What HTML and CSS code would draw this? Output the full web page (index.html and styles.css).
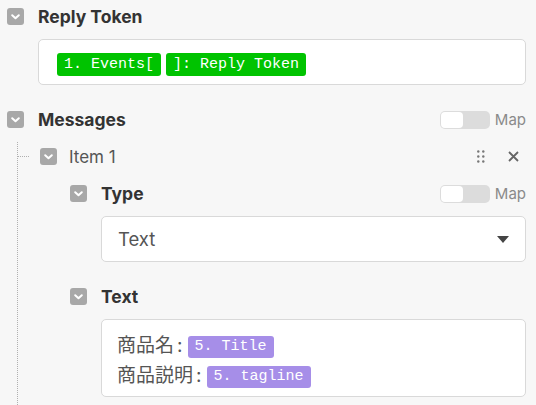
FILE: index.html
```html
<!DOCTYPE html>
<html>
<head>
  <meta charset="utf-8">
  <link rel="stylesheet" href="styles.css">
</head>
<body>
<div class="form">

  <section class="field">
    <div class="field-head">
      <span class="chk"><svg viewBox="0 0 17 17"><path d="M5.2 7.2 L8.5 10.3 L11.8 7.2"/></svg></span>
      <span class="label">Reply Token</span>
    </div>
    <div class="field-body">
      <div class="box tokens">
        <span class="pill green">1. Events[</span><span class="pill green">]: Reply Token</span>
      </div>
    </div>
  </section>

  <section class="field messages">
    <div class="field-head">
      <span class="chk"><svg viewBox="0 0 17 17"><path d="M5.2 7.2 L8.5 10.3 L11.8 7.2"/></svg></span>
      <span class="label">Messages</span>
      <div class="map-toggle"><span class="switch"><span class="knob"></span></span><span class="map-label">Map</span></div>
    </div>

    <div class="list">
      <div class="item">
        <div class="item-head">
          <span class="branch"></span>
          <span class="chk"><svg viewBox="0 0 17 17"><path d="M5.2 7.2 L8.5 10.3 L11.8 7.2"/></svg></span>
          <span class="item-label">Item 1</span>
          <span class="drag">
            <svg viewBox="0 0 8 13"><circle cx="1.3" cy="1.5" r="1.2"/><circle cx="6.3" cy="1.5" r="1.2"/><circle cx="1.3" cy="6.5" r="1.2"/><circle cx="6.3" cy="6.5" r="1.2"/><circle cx="1.3" cy="11.5" r="1.2"/><circle cx="6.3" cy="11.5" r="1.2"/></svg>
          </span>
          <span class="remove"><svg viewBox="0 0 11 11"><path d="M1 1 L10 10 M10 1 L1 10"/></svg></span>
        </div>

        <div class="item-body">
          <section class="field">
            <div class="field-head">
              <span class="chk"><svg viewBox="0 0 17 17"><path d="M5.2 7.2 L8.5 10.3 L11.8 7.2"/></svg></span>
              <span class="label">Type</span>
              <div class="map-toggle"><span class="switch"><span class="knob"></span></span><span class="map-label">Map</span></div>
            </div>
            <div class="field-body">
              <div class="box select">
                <span class="select-value">Text</span>
                <span class="caret"></span>
              </div>
            </div>
          </section>

          <section class="field text-field">
            <div class="field-head">
              <span class="chk"><svg viewBox="0 0 17 17"><path d="M5.2 7.2 L8.5 10.3 L11.8 7.2"/></svg></span>
              <span class="label">Text</span>
            </div>
            <div class="field-body">
              <div class="box textarea">
                <div class="line">商品名<span class="colon">:</span><span class="pill purple">5. Title</span></div>
                <div class="line">商品説明<span class="colon">:</span><span class="pill purple">5. tagline</span></div>
              </div>
            </div>
          </section>
        </div>
      </div>
    </div>
  </section>

</div>
</body>
</html>
```

FILE: styles.css
```css
html, body {
  margin: 0;
  padding: 0;
  height: 100%;
}
body {
  background-color: #f7f7f7;
  font-family: Inter, "Noto Sans CJK JP", sans-serif;
  color: #333;
  overflow: hidden;
}

.form {
  display: flex;
  flex-direction: column;
  height: 100vh;
  box-sizing: border-box;
  padding: 8px 10px 0 7px;
}

.field-head {
  display: flex;
  align-items: center;
  height: 17px;
}

.chk {
  flex: none;
  width: 17px;
  height: 17px;
  border-radius: 3px;
  background-color: #a8a8a8;
}
.chk svg {
  display: block;
  width: 17px;
  height: 17px;
  fill: none;
  stroke: #fff;
  stroke-width: 2;
  stroke-linecap: round;
  stroke-linejoin: round;
}

.label {
  margin-left: 14px;
  font-size: 17.5px;
  font-weight: 700;
  color: #333;
}

.field-body {
  margin-top: 14px;
  padding-left: 31px;
}

.box {
  background-color: #fff;
  border: 1px solid #d9d9d9;
  border-radius: 5px;
}

.tokens {
  display: flex;
  gap: 5px;
  padding: 13px 18px 8px;
}

.pill {
  display: inline-block;
  height: 23px;
  line-height: 23px;
  padding: 0 7px;
  border-radius: 3px;
  font-family: "Liberation Mono", monospace;
  font-size: 15px;
  color: #fff;
  white-space: pre;
}
.green {
  background-color: #00c300;
}
.purple {
  background-color: #a68ee8;
  margin-left: 5px;
  vertical-align: middle;
  height: 22px;
  line-height: 22px;
}

.messages {
  flex: 1;
  display: flex;
  flex-direction: column;
  margin-top: 26px;
}

.map-toggle {
  margin-left: auto;
  display: flex;
  align-items: center;
}
.switch {
  width: 50px;
  height: 18px;
  border-radius: 5px;
  background-color: #dcdcdc;
  padding: 1px;
  box-sizing: border-box;
}
.knob {
  display: block;
  width: 22px;
  height: 16px;
  border-radius: 4px;
  background-color: #fff;
}
.map-label {
  margin-left: 5px;
  font-size: 15px;
  color: #8a8a8a;
}

.list {
  flex: 1;
  margin-top: 14px;
  margin-left: 10px;
  border-left: 1px dotted #b0b0b0;
}

.item-head {
  display: flex;
  align-items: center;
  height: 29px;
}
.branch {
  width: 11px;
  border-top: 1px dotted #b0b0b0;
  margin-right: 11px;
}
.item-label {
  margin-left: 12px;
  font-size: 17px;
  color: #555;
}
.drag {
  margin-left: auto;
  width: 8px;
  height: 13px;
}
.drag svg {
  display: block;
  width: 8px;
  height: 13px;
  fill: #777;
}
.remove {
  margin-left: 23px;
  margin-right: 7px;
  width: 11px;
  height: 11px;
}
.remove svg {
  display: block;
  width: 11px;
  height: 11px;
  stroke: #666;
  stroke-width: 1.8;
}

.item-body {
  margin-top: 14px;
  padding-left: 52px;
}

.select {
  display: flex;
  align-items: center;
  height: 44px;
  padding: 0 16px;
}
.select-value {
  font-size: 18.5px;
  color: #555;
}
.caret {
  margin-left: auto;
  width: 0;
  height: 0;
  border-left: 6px solid transparent;
  border-right: 6px solid transparent;
  border-top: 7px solid #444;
}

.text-field {
  margin-top: 26px;
}
.textarea {
  padding: 11px 16px 5px 15px;
}
.line {
  height: 30px;
  line-height: 30px;
  font-size: 19px;
  color: #555;
}
.colon {
  margin-left: 3px;
}
```
